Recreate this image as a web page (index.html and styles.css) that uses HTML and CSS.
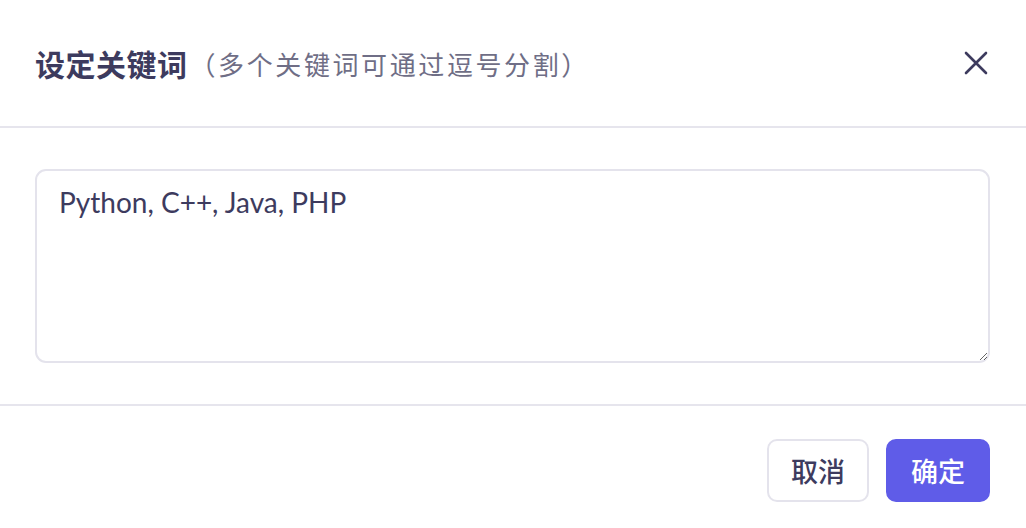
FILE: index.html
```html
<!DOCTYPE html>
<html lang="zh-CN">
<head>
<meta charset="utf-8">
<link rel="stylesheet" href="styles.css">
</head>
<body>
<div class="dialog">
  <header class="dlg-header">
    <h1 class="title">设定关键词<span class="sub">（多个关键词可通过逗号分割）</span></h1>
    <button class="close" aria-label="关闭">
      <svg width="26" height="26" viewBox="0 0 26 26"><path d="M3 3L23 23M23 3L3 23" stroke="#3d3b5e" stroke-width="2.6" stroke-linecap="round" fill="none"/></svg>
    </button>
  </header>
  <div class="dlg-body">
    <textarea class="input">Python, C++, Java, PHP</textarea>
  </div>
  <footer class="dlg-footer">
    <button class="btn btn-cancel">取消</button>
    <button class="btn btn-ok">确定</button>
  </footer>
</div>
</body>
</html>
```

FILE: styles.css
```css
* { box-sizing: border-box; }
html, body { margin: 0; padding: 0; background: #fff; }
body { font-family: Lato, "Noto Sans CJK SC", sans-serif; color: #3d3b5e; }
.dialog { width: 1026px; height: 528px; overflow: hidden; background: #fff; }
.dlg-header {
  height: 128px;
  border-bottom: 2px solid #e6e5ed;
  display: flex;
  align-items: center;
  justify-content: space-between;
  padding: 0 37px 0 35px;
}
.title {
  margin: 0;
  font-family: "Noto Sans CJK SC", sans-serif;
  font-size: 30px;
  font-weight: 700;
  color: #3d3b5e;
  letter-spacing: 0.5px;
  display: flex;
  align-items: center;
}
.sub {
  font-size: 26px;
  font-weight: 400;
  color: #6f6e86;
  letter-spacing: 2.6px;
  margin-left: 2px;
}
.close {
  border: 0;
  background: transparent;
  padding: 0;
  width: 26px;
  height: 26px;
  display: flex;
  cursor: pointer;
}
.dlg-body { padding: 41px 36px 41px 35px; border-bottom: 2px solid #e6e5ed; }
.input {
  display: block;
  width: 100%;
  height: 194px;
  border: 2px solid #e4e3ec;
  border-radius: 11px;
  padding: 15px 22px;
  font-family: Lato, "Noto Sans CJK SC", sans-serif;
  font-size: 28px;
  color: #3d3b5e;
  line-height: 1.2;
  outline: none;
  resize: vertical;
}
.dlg-footer {
  display: flex;
  justify-content: flex-end;
  gap: 17px;
  padding: 33px 36px 0 0;
}
.btn {
  height: 63px;
  padding: 0;
  border-radius: 10px;
  font-family: "Noto Sans CJK SC", sans-serif;
  font-size: 27px;
  font-weight: 500;
  white-space: nowrap;
  display: flex;
  align-items: center;
  justify-content: center;
  cursor: pointer;
}
.btn-cancel { background: #fff; border: 2px solid #e4e3ec; color: #3d3b5e; width: 102px; }
.btn-ok { background: #5f5ce8; border: 2px solid #5f5ce8; color: #fff; width: 104px; }
```
